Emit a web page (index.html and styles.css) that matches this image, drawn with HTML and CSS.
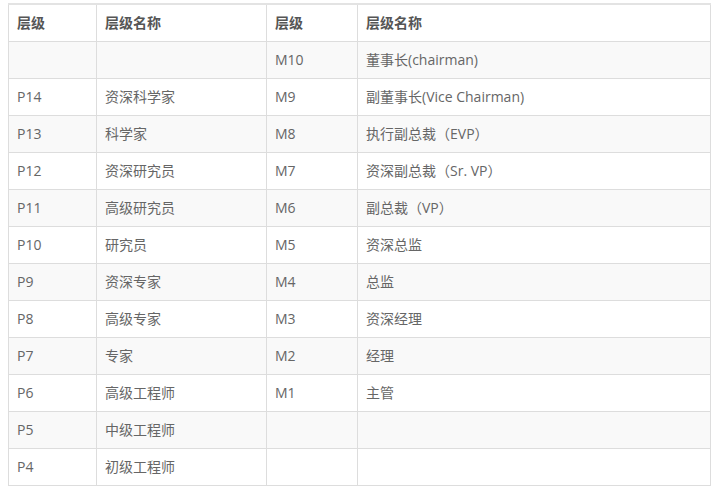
FILE: index.html
```html
<!DOCTYPE html>
<html lang="zh">
<head>
<meta charset="utf-8">
<link rel="stylesheet" href="styles.css">
</head>
<body>
<table class="levels">
  <colgroup>
    <col class="c1"><col class="c2"><col class="c3"><col class="c4">
  </colgroup>
  <thead>
    <tr><th>层级</th><th>层级名称</th><th>层级</th><th>层级名称</th></tr>
  </thead>
  <tbody>
    <tr><td></td><td></td><td>M10</td><td>董事长(chairman)</td></tr>
    <tr><td>P14</td><td>资深科学家</td><td>M9</td><td>副董事长(Vice Chairman)</td></tr>
    <tr><td>P13</td><td>科学家</td><td>M8</td><td>执行副总裁（EVP）</td></tr>
    <tr><td>P12</td><td>资深研究员</td><td>M7</td><td>资深副总裁（Sr. VP）</td></tr>
    <tr><td>P11</td><td>高级研究员</td><td>M6</td><td>副总裁（VP）</td></tr>
    <tr><td>P10</td><td>研究员</td><td>M5</td><td>资深总监</td></tr>
    <tr><td>P9</td><td>资深专家</td><td>M4</td><td>总监</td></tr>
    <tr><td>P8</td><td>高级专家</td><td>M3</td><td>资深经理</td></tr>
    <tr><td>P7</td><td>专家</td><td>M2</td><td>经理</td></tr>
    <tr><td>P6</td><td>高级工程师</td><td>M1</td><td>主管</td></tr>
    <tr><td>P5</td><td>中级工程师</td><td></td><td></td></tr>
    <tr><td>P4</td><td>初级工程师</td><td></td><td></td></tr>
  </tbody>
</table>
</body>
</html>
```
FILE: styles.css
```css
html, body {
  background: #fff;
}
body {
  margin: 0;
  padding: 3px 7px 0 8px;
  font-family: "Open Sans", "Noto Sans CJK SC", sans-serif;
  font-size: 14px;
  color: #666;
}
.levels {
  border-collapse: collapse;
  width: 703px;
  table-layout: fixed;
  border-top: 2px solid #e3e3e3;
}
.c1 { width: 88px; }
.c2 { width: 170px; }
.c3 { width: 91px; }
.c4 { width: auto; }
.levels th,
.levels td {
  border: 1px solid #ddd;
  padding: 8px 8px;
  line-height: 20px;
  height: 20px;
  text-align: left;
  vertical-align: middle;
  white-space: nowrap;
}
.levels th {
  font-weight: bold;
  color: #555;
  padding-top: 8px;
  padding-bottom: 8px;
}
.levels tbody tr:nth-child(odd) {
  background: #f9f9f9;
}
```
